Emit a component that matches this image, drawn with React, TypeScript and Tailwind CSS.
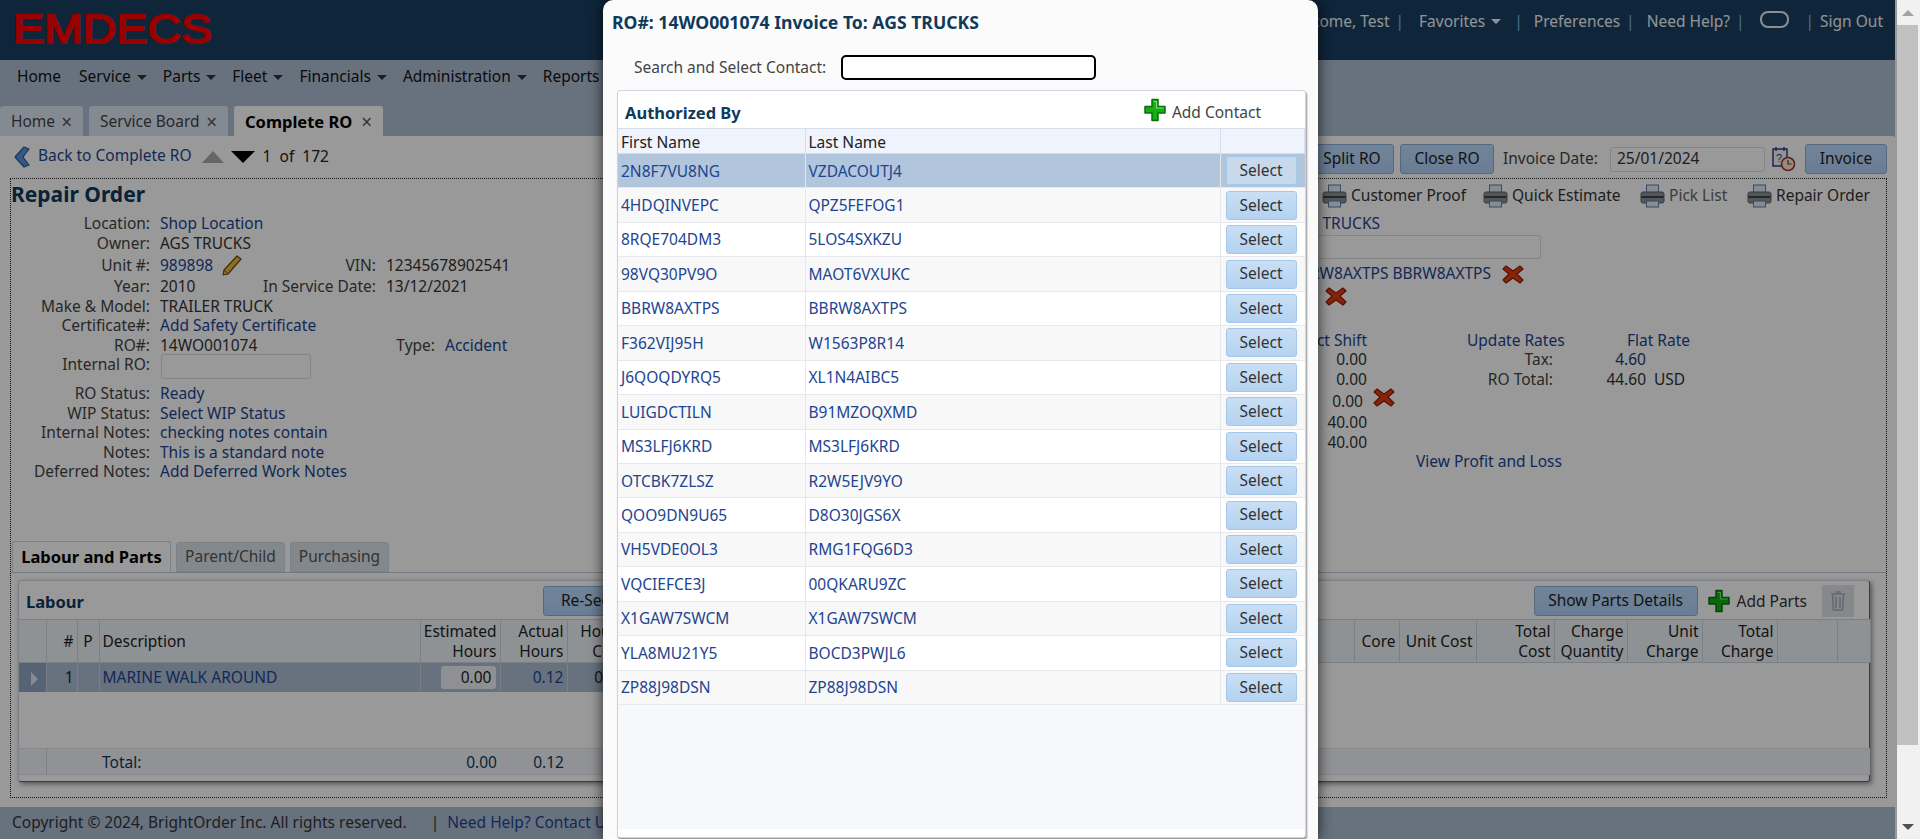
import type { ReactNode } from "react";

const font = "font-['Noto_Sans',Arial,sans-serif]";

const contacts = [
  ["2N8F7VU8NG", "VZDACOUTJ4"],
  ["4HDQINVEPC", "QPZ5FEFOG1"],
  ["8RQE704DM3", "5LOS4SXKZU"],
  ["98VQ30PV9O", "MAOT6VXUKC"],
  ["BBRW8AXTPS", "BBRW8AXTPS"],
  ["F362VIJ95H", "W1563P8R14"],
  ["J6QOQDYRQ5", "XL1N4AIBC5"],
  ["LUIGDCTILN", "B91MZOQXMD"],
  ["MS3LFJ6KRD", "MS3LFJ6KRD"],
  ["OTCBK7ZLSZ", "R2W5EJV9YO"],
  ["QOO9DN9U65", "D8O30JGS6X"],
  ["VH5VDE0OL3", "RMG1FQG6D3"],
  ["VQCIEFCE3J", "00QKARU9ZC"],
  ["X1GAW7SWCM", "X1GAW7SWCM"],
  ["YLA8MU21Y5", "BOCD3PWJL6"],
  ["ZP88J98DSN", "ZP88J98DSN"],
];

const link = "text-[#1d4590]";
const value = "text-[#333]";

function Caret({ className = "border-t-[#333]" }: { className?: string }) {
  return <span className={`ml-1.5 inline-block h-0 w-0 border-x-[5px] border-t-[5px] border-x-transparent align-middle ${className}`} />;
}

function PlusIcon() {
  return (
    <svg width="22" height="24" viewBox="0 0 22 24" className="shrink-0">
      <path d="M8 1.5h6v7h7v6.5h-7v7.5H8V15H1V8.5h7z" fill="#12b012" stroke="#0b6e0b" strokeWidth="1.5" strokeLinejoin="round" />
      <path d="M9.5 3.5h3v6.5h7" fill="none" stroke="#6fe86f" strokeWidth="1.2" />
    </svg>
  );
}

function RedX() {
  return (
    <svg width="22" height="22" viewBox="0 0 22 22" className="shrink-0">
      <path d="M4 3l7 5 7-5 3 3-6 5 6 6-3 3-7-5-7 5-3-3 6-6-6-5z" fill="#e03c10" stroke="#8e1d05" strokeWidth="1.2" strokeLinejoin="round" />
    </svg>
  );
}

function PrinterIcon() {
  return (
    <svg width="25" height="24" viewBox="0 0 25 24" className="shrink-0">
      <rect x="6.5" y="1" width="12" height="8" fill="#dfe9f5" stroke="#5c7fa8" />
      <rect x="1" y="8" width="23" height="11" rx="2" fill="#8d9296" stroke="#5e6266" />
      <rect x="1.5" y="12" width="22" height="2" fill="#3f4245" />
      <rect x="6.5" y="17" width="12" height="6" fill="#dfe9f5" stroke="#5c7fa8" />
    </svg>
  );
}

function CalendarClock() {
  return (
    <svg width="24" height="26" viewBox="0 0 24 26" className="shrink-0">
      <rect x="1" y="3" width="14" height="17" fill="#f2f5fb" stroke="#33407e" strokeWidth="1.5" />
      <path d="M4 1v4M12 1v4" stroke="#33407e" strokeWidth="1.5" />
      <text x="4" y="16" fontSize="11" fill="#33407e" fontFamily="Liberation Sans">?</text>
      <circle cx="16" cy="18" r="6.5" fill="#fbe9d2" stroke="#a8322a" strokeWidth="1.6" />
      <path d="M16 14v4h3.5" fill="none" stroke="#7a2a20" strokeWidth="1.2" />
    </svg>
  );
}

function Btn({ children, className = "" }: { children: ReactNode; className?: string }) {
  return (
    <button className={`h-[30px] shrink-0 rounded-[3px] border border-[#8db0d6] bg-gradient-to-b from-[#bcdcff] to-[#b0d0f8] whitespace-nowrap text-[#222] ${className}`}>
      {children}
    </button>
  );
}

function Field({
  label,
  children,
  second,
  className = "h-[19.5px]",
}: {
  label: string;
  children: ReactNode;
  second?: ReactNode;
  className?: string;
}) {
  return (
    <div className={`flex items-center whitespace-nowrap leading-[19px] ${className}`}>
      <div className="flex w-[190px] shrink-0 items-center">
        <span className="w-[139px] shrink-0 text-right text-[#444]">{label}:</span>
        <span className="ml-2.5 flex items-center">{children}</span>
      </div>
      {second}
    </div>
  );
}

function Second({ label, width, children }: { label: string; width: string; children: ReactNode }) {
  return (
    <>
      <span className={`${width} shrink-0 text-right text-[#444]`}>{label}:</span>
      <span className="ml-2.5">{children}</span>
    </>
  );
}

function Tab({ label, width, active }: { label: string; width: string; active?: boolean }) {
  return (
    <div className={`flex h-[30px] items-center justify-between whitespace-nowrap rounded-t-[3px] pl-[11px] pr-[11px] pt-[2px] ${width} ${active ? "bg-white text-[16.5px] font-bold text-black" : "bg-[#dce6f2] text-[#444]"}`}>
      {label}
      <span className="text-[19px] font-normal leading-none text-[#555]">×</span>
    </div>
  );
}

function SubTab({ label, active, w }: { label: string; active?: boolean; w: string }) {
  return (
    <div className={`flex items-center justify-center whitespace-nowrap rounded-t-[3px] border border-[#cfd8e2] ${w} ${active ? "h-[31px] border-b-0 bg-white text-[16.5px] font-bold text-black" : "h-[30px] bg-[#dbe3ec] text-[#555]"}`}>
      {label}
    </div>
  );
}

function PageBehind() {
  return (
    <div className={`flex h-[839px] w-[1895px] flex-col overflow-hidden bg-[#acbed2] text-[15.5px] ${font}`}>
      {/* top bar */}
      <header className="flex h-[60px] shrink-0 items-start justify-between bg-[#193f62] pl-3 pr-3">
        <svg width="206" height="36" viewBox="0 0 206 36" className="mt-[10px] overflow-visible">
          <text x="1" y="33" fontSize="40" fontFamily="Liberation Sans" fill="#ff0000" stroke="#ff0000" strokeWidth="1.8" textLength="199" lengthAdjust="spacingAndGlyphs">EMDECS</text>
        </svg>
        <div className="mt-[10px] flex items-center whitespace-nowrap text-[#f2f6fb]">
          <span>Welcome, Test</span>
          <span className="ml-[6px] text-[#7fb4e6]">|</span>
          <span className="ml-[15px]">Favorites</span>
          <Caret className="border-t-[#f2f6fb]" />
          <span className="ml-[13px] text-[#7fb4e6]">|</span>
          <span className="ml-[11px]">Preferences</span>
          <span className="ml-[6px] text-[#7fb4e6]">|</span>
          <span className="ml-[12px]">Need Help?</span>
          <span className="ml-[6px] text-[#7fb4e6]">|</span>
          <span className="mb-1 ml-[15px] h-[17px] w-[29px] rounded-[8px] border-2 border-[#e6eef7]" />
          <span className="ml-[17px] text-[#7fb4e6]">|</span>
          <span className="ml-[6px]">Sign Out</span>
        </div>
      </header>

      {/* menu */}
      <nav className="flex h-[46px] shrink-0 items-start gap-4 pl-[17px] pt-[5px] text-[#111]">
        <span className="mr-[2px]">Home</span>
        {["Service", "Parts", "Fleet", "Financials", "Administration"].map((m) => (
          <span key={m} className="whitespace-nowrap">
            {m}
            <Caret />
          </span>
        ))}
        <span>Reports</span>
      </nav>

      <div className="flex h-[30px] shrink-0 items-end gap-[6px]">
        <Tab label="Home" width="w-[83px]" />
        <Tab label="Service Board" width="w-[139px]" />
        <Tab label="Complete RO" width="w-[149px]" active />
      </div>

      {/* content */}
      <main className="h-[671px] shrink-0 rounded-tr-[3px] bg-white pl-[10px] pr-2">
        <div className="flex h-[42px] items-center justify-between">
          <div className="flex items-center whitespace-nowrap">
            <svg width="18" height="24" viewBox="0 0 18 24" className="ml-[3px] mr-[7px]">
              <path d="M11 2l5 2-6 8 6 8-5 2-9-10z" fill="#5a94d8" stroke="#2a5c9c" strokeWidth="1.2" strokeLinejoin="round" />
            </svg>
            <span className={`mb-[2px] ${link}`}>Back to Complete RO</span>
            <span className="ml-[10px] h-0 w-0 border-x-[11px] border-b-[12px] border-x-transparent border-b-[#aaa]" />
            <span className="ml-[7px] h-0 w-0 border-x-[12px] border-t-[12px] border-x-transparent border-t-black" />
            <span className="ml-2 text-[#222]">1&nbsp; of&nbsp; 172</span>
          </div>
          <div className="flex items-center pt-[4px]">
            <Btn className="w-[100px] pl-[16px]">Split RO</Btn>
            <Btn className="ml-[6px] w-[94px]">Close RO</Btn>
            <span className="ml-[9px] w-[107px] shrink-0 whitespace-nowrap text-[#444]">Invoice Date:</span>
            <div className="flex h-[25px] w-[155px] items-center rounded-[3px] border border-[#ddd] pl-1.5 text-[#333]">25/01/2024</div>
            <span className="ml-[7px]"><CalendarClock /></span>
            <Btn className="ml-[9px] w-[82px]">Invoice</Btn>
          </div>
        </div>

        <div className="h-[620px] w-[1877px] border border-dotted border-[#222]">
          <div className="flex h-[363px]">
            {/* left form */}
            <div className="w-[1310px] shrink-0">
              <h1 className="mt-[3px] h-[24px] text-[21px] font-bold leading-[24px] text-[#0f3a5c]">Repair Order</h1>
              <div className="mt-[8px]">
                <Field label="Location"><span className={link}>Shop Location</span></Field>
                <Field label="Owner"><span className={value}>AGS TRUCKS</span></Field>
                <Field
                  label="Unit #"
                  className="h-[24px]"
                  second={<Second label="VIN" width="w-[175px]"><span className={value}>12345678902541</span></Second>}
                >
                  <span className={link}>989898</span>
                  <svg width="22" height="22" viewBox="0 0 22 22" className="ml-2">
                    <path d="M16 2l4 3L7 20l-5 1 1-5z" fill="#e8b93c" stroke="#6d4c10" strokeWidth="1.2" strokeLinejoin="round" />
                    <path d="M3 16l4 4" stroke="#6d4c10" />
                  </svg>
                </Field>
                <Field label="Year" second={<Second label="In Service Date" width="w-[175px]"><span className={value}>13/12/2021</span></Second>}>
                  <span className={value}>2010</span>
                </Field>
                <Field label="Make &amp; Model"><span className={value}>TRAILER TRUCK</span></Field>
                <Field label="Certificate#"><span className={link}>Add Safety Certificate</span></Field>
                <Field label="RO#" second={<Second label="Type" width="w-[234px]"><span className={link}>Accident</span></Second>}>
                  <span className={value}>14WO001074</span>
                </Field>
                <div className="flex h-[29px] items-start">
                  <span className="w-[139px] text-right leading-[19px] text-[#444]">Internal RO:</span>
                  <span className="-mt-[1px] ml-[11px] h-[25px] w-[150px] rounded-[3px] border border-[#ddd]" />
                </div>
                <Field label="RO Status"><span className={link}>Ready</span></Field>
                <Field label="WIP Status"><span className={link}>Select WIP Status</span></Field>
                <Field label="Internal Notes"><span className={link}>checking notes contain</span></Field>
                <Field label="Notes"><span className={link}>This is a standard note</span></Field>
                <Field label="Deferred Notes"><span className={link}>Add Deferred Work Notes</span></Field>
              </div>
            </div>

            {/* right side, mostly behind the dialog */}
            <div className="w-[566px] shrink-0 whitespace-nowrap">
              <div className="mt-[5px] flex h-[24px] items-center text-[#333]">
                <span className="ml-[1px] flex w-[161px] items-center gap-1"><PrinterIcon />Customer Proof</span>
                <span className="flex w-[157px] items-center gap-1"><PrinterIcon />Quick Estimate</span>
                <span className="flex w-[107px] items-center gap-1 text-[#666]"><PrinterIcon />Pick List</span>
                <span className="flex items-center gap-1"><PrinterIcon />Repair Order</span>
              </div>
              <div className={`mt-[3px] flex h-[24px] w-[59px] justify-end leading-[24px] ${link}`}>AGS TRUCKS</div>
              <div className="ml-[-100px] h-[24px] w-[320px] rounded-[3px] border border-[#ddd]" />
              <div className="mt-[4px] flex h-[22px] items-center justify-end pr-[363px]">
                <span className={link}>BBRW8AXTPS BBRW8AXTPS</span>
                <span className="ml-[11px]"><RedX /></span>
              </div>
              <div className="ml-[4px] h-[22px]"><RedX /></div>
              <div className="mt-[23px] flex">
                <div className="w-[46px] shrink-0 text-right">
                  <div className={`-ml-[60px] h-[20px] leading-[20px] ${link}`}>Direct Shift</div>
                  <div className={`h-[19.5px] leading-[19px] ${value}`}>0.00</div>
                  <div className={`h-[19.5px] leading-[19px] ${value}`}>0.00</div>
                  <div className={`mt-[2px] h-[20px] pr-1 leading-[20px] ${value}`}>0.00</div>
                  <div className={`mt-[2px] h-[19.5px] leading-[19px] ${value}`}>40.00</div>
                  <div className={`h-[19.5px] leading-[19px] ${value}`}>40.00</div>
                </div>
                <div className="ml-[6px] mt-[56px]"><RedX /></div>
                <div className="ml-[72px] w-[280px]">
                  <div className={`flex h-[20px] leading-[20px] ${link}`}>
                    <span className="w-[160px]">Update Rates</span>
                    <span>Flat Rate</span>
                  </div>
                  <div className="flex h-[19.5px] leading-[19px]">
                    <span className="w-[86px] text-right text-[#444]">Tax:</span>
                    <span className="w-[93px] text-right text-[#1d3a70]">4.60</span>
                  </div>
                  <div className="flex h-[19.5px] leading-[19px]">
                    <span className="w-[86px] text-right text-[#444]">RO Total:</span>
                    <span className={`w-[93px] text-right ${value}`}>44.60</span>
                    <span className={`ml-2 ${value}`}>USD</span>
                  </div>
                </div>
              </div>
              <div className={`-mt-px ml-[95px] h-[20px] leading-[20px] ${link}`}>View Profit and Loss</div>
            </div>
          </div>

          {/* lower tabs */}
          <div className="flex h-[31px] items-end gap-[5px] border-b border-[#bccada] pl-px">
            <SubTab label="Labour and Parts" active w="w-[159px]" />
            <SubTab label="Parent/Child" w="w-[109px]" />
            <SubTab label="Purchasing" w="w-[99px]" />
          </div>

          {/* labour and parts panel */}
          <section className="ml-[7px] mt-[7px] h-[202px] w-[1852px] rounded-[3px] border border-[#cfd8e2] border-b-[#666] border-r-[#666] shadow-[2px_2px_5px_rgba(0,0,0,0.45)]">
            <div className="flex h-[38px] items-center justify-between pt-[2px]">
              <div className="flex items-center">
                <span className="ml-[7px] w-[517px] pt-[2px] text-[16.5px] font-bold text-[#0f3a5c]">Labour</span>
                <Btn className="w-[130px]">Re-Sequence</Btn>
              </div>
              <div className="flex items-center">
                <Btn className="w-[164px]">Show Parts Details</Btn>
                <span className="ml-[10px]"><PlusIcon /></span>
                <span className={`ml-[7px] pt-[2px] ${value}`}>Add Parts</span>
                <span className="mx-[15px] flex h-[32px] w-[32px] items-center justify-center bg-[#dfe3ea]">
                  <svg width="18" height="24" viewBox="0 0 18 24">
                    <path d="M6 3h6M2 5h14M3.5 6l1 15h9l1-15M7 8v11M11 8v11" fill="none" stroke="#a7b0bc" strokeWidth="1.6" />
                  </svg>
                </span>
              </div>
            </div>
            <table className="w-[1851px] table-fixed border-collapse">
              <colgroup>
                <col className="w-[27px]" />
                <col className="w-[31px]" />
                <col className="w-[22px]" />
                <col className="w-[321px]" />
                <col className="w-[80px]" />
                <col className="w-[67px]" />
                <col className="w-[61px]" />
                <col className="w-[726px]" />
                <col className="w-[45px]" />
                <col className="w-[77px]" />
                <col className="w-[78px]" />
                <col className="w-[73px]" />
                <col className="w-[75px]" />
                <col className="w-[75px]" />
                <col className="w-[60px]" />
                <col className="w-[33px]" />
              </colgroup>
              <thead>
                <tr className="h-[43px] border-y border-[#ccd6e0] bg-[#eef3f8] text-[#222] [&>th]:border-r [&>th]:border-[#ccd6e0] [&>th]:px-[3px] [&>th]:font-normal [&>th]:leading-[20px]">
                  <th />
                  <th className="text-right">#</th>
                  <th className="text-center">P</th>
                  <th className="text-left">Description</th>
                  <th className="text-right">Estimated<br />Hours</th>
                  <th className="text-right">Actual<br />Hours</th>
                  <th className="text-right">Hours<br />Cost</th>
                  <th />
                  <th className="text-right">Core</th>
                  <th className="text-right">Unit Cost</th>
                  <th className="text-right">Total<br />Cost</th>
                  <th className="text-right">Charge<br />Quantity</th>
                  <th className="text-right">Unit<br />Charge</th>
                  <th className="text-right">Total<br />Charge</th>
                  <th />
                  <th />
                </tr>
              </thead>
              <tbody>
                <tr className="h-[29px] text-[#222] [&>td]:pt-px">
                  <td className="bg-[#8ea5c4] text-center">
                    <span className="ml-1 inline-block h-0 w-0 border-y-[7px] border-l-[7px] border-y-transparent border-l-[#dce8f6] align-middle" />
                  </td>
                  <td className="border-l border-[#ccd6e0] bg-[#acbed2] px-[3px] text-right">1</td>
                  <td className="border-l border-[#ccd6e0] bg-[#acbed2]" />
                  <td className="border-l border-[#ccd6e0] bg-[#acbed2] px-[3px]"><span className={link}>MARINE WALK AROUND</span></td>
                  <td className="border-l border-[#ccd6e0] bg-[#acbed2] pl-[20px] pr-1">
                    <div className="flex h-[23px] w-[55px] items-center justify-end rounded-[3px] bg-[#eef1f5] pr-1">0.00</div>
                  </td>
                  <td className={`border-l border-[#ccd6e0] bg-[#acbed2] px-[3px] text-right ${link}`}>0.12</td>
                  <td className="border-l border-[#ccd6e0] bg-[#acbed2] px-[3px] text-right">0.00</td>
                  <td colSpan={9} />
                </tr>
                <tr className="h-[57px]"><td colSpan={16} /></tr>
                <tr className="h-[25px] border-y border-[#dfe5ec] bg-[#f1f4f8] text-[#0f3a5c] [&>td]:pt-[2px]">
                  <td className="border-r border-[#ccd6e0]" />
                  <td colSpan={2} />
                  <td className="px-[3px]">Total:</td>
                  <td className="px-[3px] text-right">0.00</td>
                  <td className="px-[3px] text-right">0.12</td>
                  <td colSpan={10} />
                </tr>
              </tbody>
            </table>
          </section>
        </div>
      </main>

      <footer className={`flex h-[32px] shrink-0 items-center whitespace-nowrap pl-3 ${value}`}>
        Copyright © 2024, BrightOrder Inc. All rights reserved.
        <span className="ml-6">|</span>
        <span className={`ml-2 ${link}`}>Need Help? Contact Us</span>
      </footer>
    </div>
  );
}

function ContactDialog() {
  return (
    <div className={`absolute left-[603px] top-0 h-[839px] w-[715px] overflow-hidden rounded-t-[10px] bg-[#fbfbfb] text-[15.5px] shadow-[0_0_14px_rgba(0,0,0,0.75)] ${font}`}>
      <h2 className="ml-[9px] mt-[12px] h-[20px] whitespace-nowrap text-[17.6px] font-bold leading-[20px] text-[#0f3a5c]">RO#: 14WO001074 Invoice To: AGS TRUCKS</h2>
      <div className="mt-[23px] flex h-[25px] items-center">
        <span className="ml-[31px] w-[207px] shrink-0 whitespace-nowrap text-[#444]">Search and Select Contact:</span>
        <span className="h-[25px] w-[255px] rounded-[5px] border-2 border-black bg-white" />
      </div>
      <div className="ml-[14px] mt-[10px] h-[748px] w-[689px] rounded-[3px] border border-[#cbd5e0] bg-white shadow-[1px_2px_2px_rgba(0,0,0,0.4)]">
        <div className="flex h-[37px] items-center justify-between">
          <span className="ml-[7px] pt-[7px] text-[16.5px] font-bold text-[#0f3a5c]">Authorized By</span>
          <span className="mr-[44px] flex items-center gap-[6px] text-[#444]">
            <PlusIcon />
            <span className="pt-[6px]">Add Contact</span>
          </span>
        </div>
        <div className="flex h-[701px] flex-col bg-[#f7f8fc]">
          <table className="w-full table-fixed border-collapse">
            <colgroup>
              <col className="w-[187px]" />
              <col className="w-[415px]" />
              <col />
            </colgroup>
            <thead>
              <tr className="h-[25px] border-y border-[#d5deea] bg-[#eff3fb] text-left text-[#222] [&>th]:border-r [&>th]:border-[#d5deea] [&>th]:px-[3px] [&>th]:pt-[2px] [&>th]:font-normal [&>th]:leading-[20px]">
                <th>First Name</th>
                <th>Last Name</th>
                <th />
              </tr>
            </thead>
            <tbody>
              {contacts.map(([first, last], i) => (
                <tr key={first} className={`h-[34.44px] border-b border-[#e6e8ec] ${link} ${i === 0 ? "bg-[#b1c5dd]" : i % 2 === 1 ? "bg-[#f8f8f8]" : "bg-white"}`}>
                  <td className="border-r border-[#e6e8ec] px-[3px] pt-px">{first}</td>
                  <td className="border-r border-[#e6e8ec] px-[3px] pt-px">{last}</td>
                  <td className="px-[5px]">
                    <button className={`flex h-[29px] w-[71px] items-center justify-center rounded-[3px] border border-[#a5c8ea] text-[#333] ${i === 0 ? "bg-[#c8d9ec]" : "bg-gradient-to-b from-[#c9dff5] to-[#b4d2f0]"}`}>
                      Select
                    </button>
                  </td>
                </tr>
              ))}
            </tbody>
          </table>
        </div>
      </div>
    </div>
  );
}

function Scrollbar() {
  return (
    <aside className="flex h-[839px] w-[23px] shrink-0 flex-col bg-[#f1f1f1]">
      <div className="flex h-[25px] w-[21px] items-center justify-center">
        <span className="h-0 w-0 border-x-[6px] border-b-[6px] border-x-transparent border-b-[#a3a3a3]" />
      </div>
      <div className="h-[720px] w-[21px] bg-[#c1c1c1]" />
      <div className="flex-1" />
      <div className="flex h-[24px] w-[21px] items-center justify-center">
        <span className="h-0 w-0 border-x-[6px] border-t-[6px] border-x-transparent border-t-[#505050]" />
      </div>
    </aside>
  );
}

export default function App() {
  return (
    <div className="relative flex h-[839px] w-[1920px] overflow-hidden bg-white">
      <div className="relative h-[839px] w-[1897px] shrink-0 overflow-hidden">
        <PageBehind />
        <div className="absolute inset-0 bg-black/40" />
        <ContactDialog />
      </div>
      <Scrollbar />
    </div>
  );
}
